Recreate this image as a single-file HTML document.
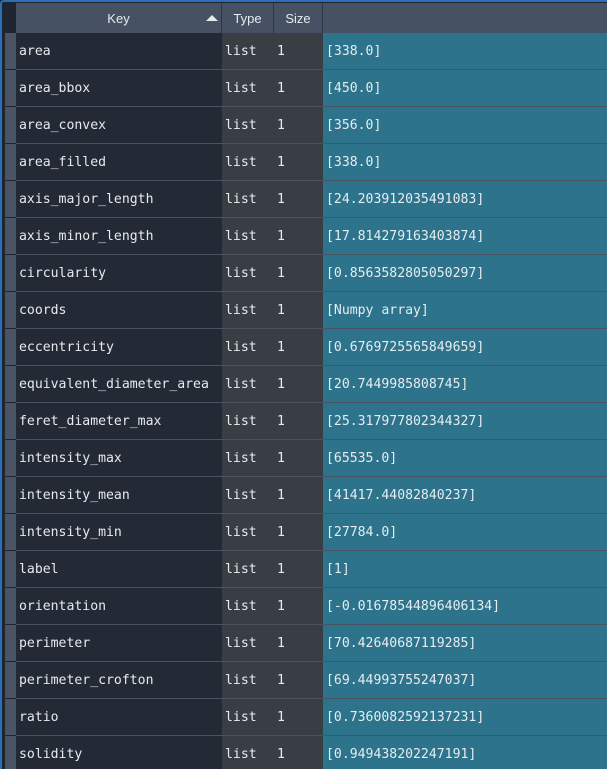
<!DOCTYPE html>
<html><head><style>
html,body{margin:0;width:607px;height:769px;overflow:hidden;background:#1e252e;font-family:"DejaVu Sans Mono","Liberation Mono",monospace;}
#w{position:absolute;left:0;top:0;width:607px;height:769px;overflow:hidden;border-left:2px solid #2a6fb8;border-top:2px solid #2a6fb8;border-top-left-radius:4px;box-sizing:border-box;background:#1e252e;}
.h{position:absolute;top:1px;height:30px;background:#465263;color:#e6e9ee;font:13px "Liberation Sans",sans-serif;line-height:32px;text-align:center;border-right:1px solid #2e3642;box-sizing:border-box}
.r{position:absolute;left:0;height:37px;width:605px}
.c{position:absolute;top:0;height:36px;overflow:hidden;border-bottom:1px solid #4a5260;border-right:1px solid #4a5260;color:#e8eaee;font-size:13.15px;line-height:38px;padding-left:3px;box-sizing:content-box;white-space:nowrap}
.g{left:3px;width:11px;background:#4a5464;padding:0;border-right:none;border-bottom:1px solid #1e252e}
.k{left:14px;width:203px;background:#232a35}
.t{left:220px;width:49px;background:#393e45}
.s{left:272px;width:46px;background:#393e45}
.v{left:321px;width:283px;background:#2c738b;color:#e6ecf0;border-right:none}
</style></head><body><div id="w">
<div class="h" style="left:14px;width:206px">Key<span style="position:absolute;right:3px;top:12px;width:0;height:0;border-left:6px solid transparent;border-right:6px solid transparent;border-bottom:6px solid #e6e9ee"></span></div>
<div class="h" style="left:220px;width:52px">Type</div>
<div class="h" style="left:272px;width:49px">Size</div>
<div class="h" style="left:321px;width:284px;border-right:none"></div>
<div id="rows"></div>
</div>
<script>
var d=[["area","[338.0]"],["area_bbox","[450.0]"],["area_convex","[356.0]"],["area_filled","[338.0]"],["axis_major_length","[24.203912035491083]"],["axis_minor_length","[17.814279163403874]"],["circularity","[0.8563582805050297]"],["coords","[Numpy array]"],["eccentricity","[0.6769725565849659]"],["equivalent_diameter_area","[20.7449985808745]"],["feret_diameter_max","[25.317977802344327]"],["intensity_max","[65535.0]"],["intensity_mean","[41417.44082840237]"],["intensity_min","[27784.0]"],["label","[1]"],["orientation","[-0.01678544896406134]"],["perimeter","[70.42640687119285]"],["perimeter_crofton","[69.44993755247037]"],["ratio","[0.7360082592137231]"],["solidity","[0.949438202247191]"]];
var h="";d.forEach(function(x,i){h+='<div class="r" style="top:'+(31+i*37)+'px"><div class="c g"></div><div class="c k">'+x[0]+'</div><div class="c t">list</div><div class="c s">1</div><div class="c v">'+x[1]+'</div></div>';});
document.getElementById("rows").innerHTML=h;
</script></body></html>
